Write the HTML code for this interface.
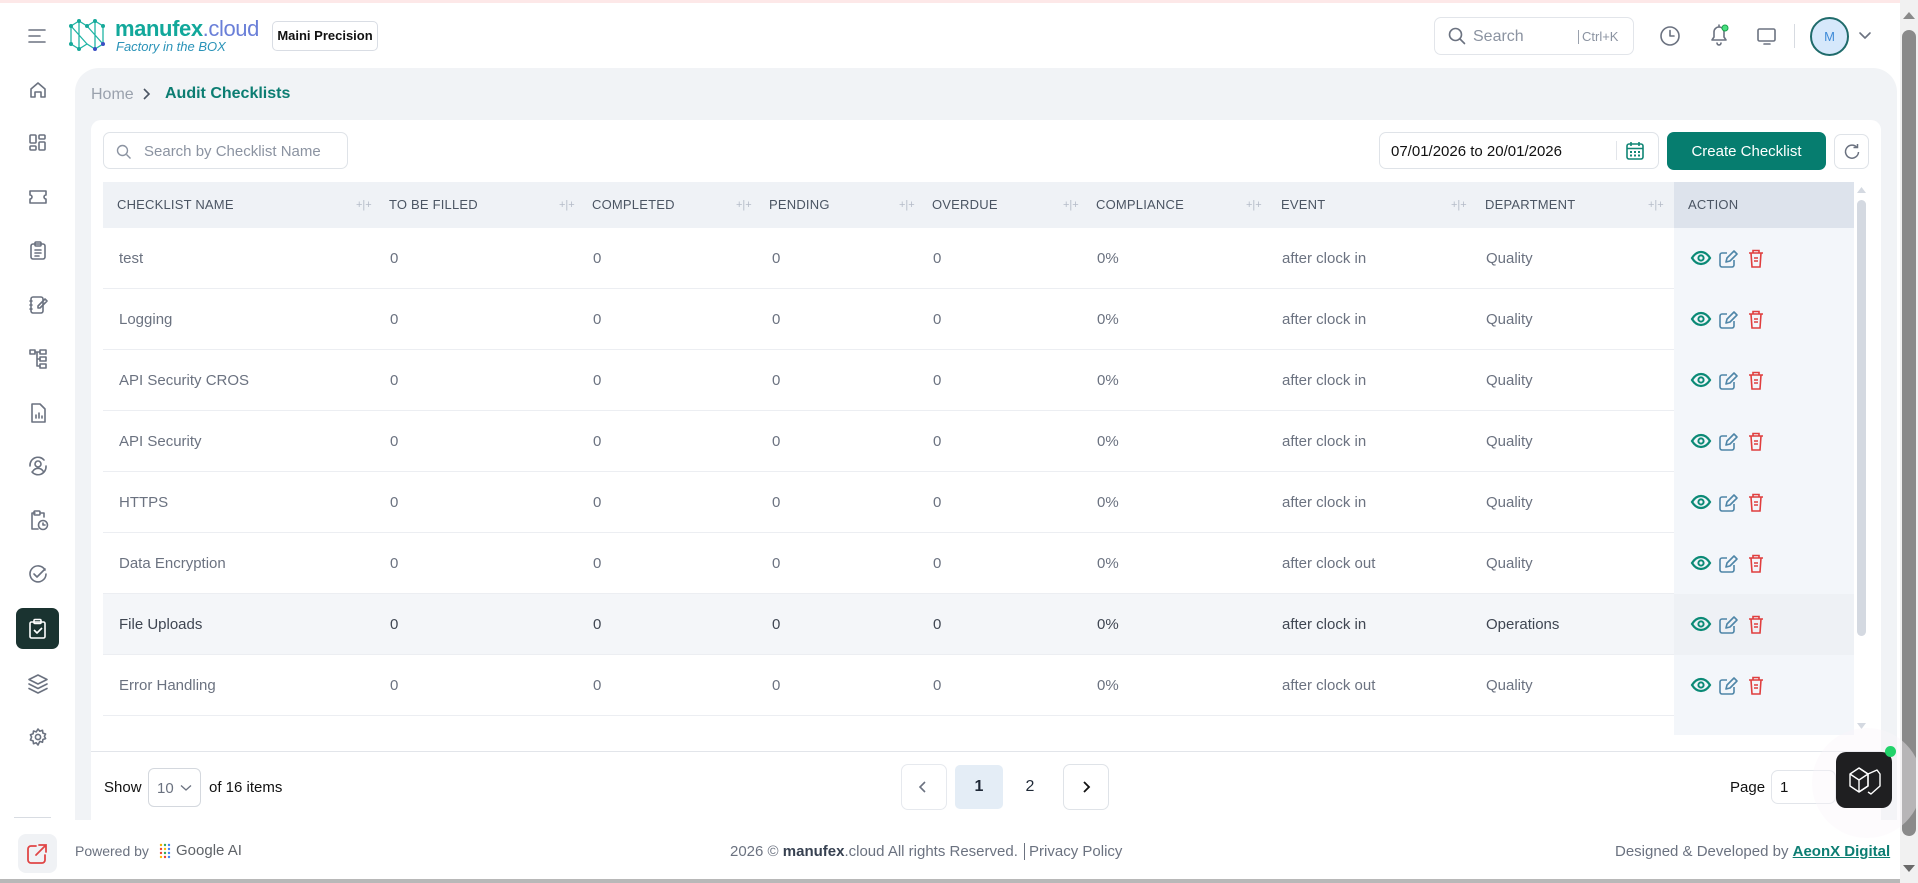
<!DOCTYPE html>
<html><head><meta charset="utf-8"><style>
*{box-sizing:border-box;margin:0;padding:0}
body{width:1918px;height:883px;overflow:hidden;background:#fff;font-family:"Liberation Sans",sans-serif;position:relative;color:#6b7280}
.a{position:absolute}
svg{display:block}
.ic{stroke:#6b7280;fill:none;stroke-width:1.6;stroke-linecap:round;stroke-linejoin:round}
.th{position:absolute;top:182px;height:46px;line-height:46px;font-size:13px;color:#4b5563;letter-spacing:.2px}
.rz{position:absolute;top:182px;height:46px;line-height:46px;font-size:11px;color:#b5bcc8}
.row{position:absolute;left:103px;width:1571px;height:61px;border-bottom:1px solid #eceef2;font-size:15px;color:#6b7280}
.row span{position:absolute;top:0;line-height:61px}
</style></head><body>
<div class="a" style="left:0;top:0;width:1918px;height:3px;background:#fde8e8"></div>
<svg class="a" style="left:28px;top:28px" width="20" height="16"><path d="M1 2h16M1 8h11M1 14h16" stroke="#6b7280" stroke-width="1.6" stroke-linecap="round"/></svg>
<svg class="a" style="left:67px;top:18px" width="42" height="34" viewBox="0 0 42 34"><g stroke="#1fb5a5" stroke-width="1.3" fill="none"><path d="M4 8L12 3L20 8L28 3L36 8V26L28 31L20 26L12 31L4 26Z"/><path d="M12 3V31M4 8L20 26M28 3V31M20 8L36 26"/></g><g fill="#17a99a"><circle cx="4" cy="8" r="2"/><circle cx="12" cy="3" r="2"/><circle cx="20" cy="8" r="2"/><circle cx="28" cy="3" r="2"/><circle cx="36" cy="8" r="2"/><circle cx="4" cy="26" r="2"/><circle cx="12" cy="31" r="2"/><circle cx="28" cy="31" r="2" fill="#3b4fc4"/><circle cx="36" cy="26" r="2" fill="#3b4fc4"/></g></svg>
<div class="a" style="left:115px;top:16px;font-size:22px;color:#12a89b;font-weight:bold;letter-spacing:-.4px">manufex<span style="font-weight:normal;color:#6a7fd8">.cloud</span></div>
<div class="a" style="left:116px;top:39px;font-size:13px;font-style:italic;color:#2a93b8">Factory in the BOX</div>
<div class="a" style="left:272px;top:21px;width:106px;height:30px;border:1px solid #d9dde4;border-radius:5px;font-size:13px;font-weight:bold;color:#111;text-align:center;line-height:28px">Maini Precision</div>
<div class="a" style="left:1434px;top:17px;width:200px;height:38px;border:1px solid #e2e5ea;border-radius:7px"></div>
<svg class="a" style="left:1448px;top:27px" width="18" height="18"><circle cx="7.5" cy="7.5" r="6" class="ic" stroke="#4b5563"/><path d="M12 12l4.5 4.5" class="ic" stroke="#4b5563"/></svg>
<div class="a" style="left:1473px;top:28px;font-size:16px;color:#8b93a1">Search</div>
<div class="a" style="left:1578px;top:30px;font-size:13px;color:#8b93a1;border-left:1px solid #9aa1ad;padding-left:3px;line-height:14px">Ctrl+K</div>
<svg class="a" style="left:1659px;top:25px" width="22" height="22"><circle cx="11" cy="11" r="9" class="ic" stroke="#4b5563"/><path d="M11 5.5V11h4" class="ic" stroke="#4b5563"/></svg>
<svg class="a" style="left:1707px;top:23px" width="24" height="24"><path d="M5 17h14l-2-3v-5a5 5 0 0 0-10 0v5zM10 20a2 2 0 0 0 4 0M12 2v2" class="ic" stroke="#4b5563"/><circle cx="18" cy="5" r="3" fill="#4ade80" stroke="#16a34a"/></svg>
<svg class="a" style="left:1756px;top:27px" width="22" height="20"><rect x="2" y="2" width="17" height="12" rx="1.5" class="ic" stroke="#4b5563"/><path d="M8 17h6" class="ic" stroke="#4b5563"/></svg>
<div class="a" style="left:1794px;top:24px;width:1px;height:24px;background:#d7dbe1"></div>
<div class="a" style="left:1810px;top:17px;width:39px;height:39px;border-radius:50%;background:#d6e8fb;border:2px solid #1f6b6b;text-align:center;line-height:35px;font-size:13px;color:#3f8bd8">M</div>
<svg class="a" style="left:1858px;top:31px" width="14" height="10"><path d="M2 2l5 5 5-5" class="ic" stroke="#4b5563"/></svg>
<div class="a" style="left:1900px;top:0;width:18px;height:883px;background:#f1f1f1"></div>
<div class="a" style="left:1902px;top:30px;width:14px;height:806px;border-radius:7px;background:#8a8a8a"></div>
<svg class="a" style="left:1902px;top:10px" width="14" height="10"><path d="M1 9L7 2L13 9Z" fill="#8a8a8a"/></svg>
<svg class="a" style="left:1902px;top:864px" width="14" height="10"><path d="M1 1L7 8L13 1Z" fill="#6a6a6a"/></svg>
<div class="a" style="left:0;top:879px;width:1900px;height:4px;background:#b8b8b8"></div>
<svg class="a" style="left:0;top:78px" width="75" height="680">
<g class="ic" transform="translate(29,2)"><path d="M2 9L9 3l7 6v8h-4v-5H6v5H2z"/></g>
<g class="ic" transform="translate(29,56)"><rect x="1" y="1" width="6" height="8" rx="1"/><rect x="10" y="1" width="6" height="4" rx="1"/><rect x="1" y="12" width="6" height="4" rx="1"/><rect x="10" y="8" width="6" height="8" rx="1"/></g>
<g class="ic" transform="translate(29,110)"><path d="M1 3h16v4a2 2 0 0 0 0 4v4H1v-4a2 2 0 0 0 0-4z"/></g>
<g class="ic" transform="translate(30,163)"><rect x="1" y="3" width="14" height="15" rx="2"/><rect x="5" y="1" width="6" height="4" rx="1"/><path d="M5 9h6M5 12h6M5 15h4"/></g>
<g class="ic" transform="translate(29,217)"><rect x="2" y="2" width="12" height="16" rx="2"/><path d="M1 6h2M1 10h2M1 14h2M9 11l7-7 2 2-7 7H9z"/></g>
<g class="ic" transform="translate(29,271)"><rect x="1" y="1" width="5" height="4"/><rect x="11" y="1" width="6" height="4"/><rect x="11" y="8" width="6" height="4"/><rect x="11" y="15" width="6" height="4"/><path d="M6 3h5M8 3v14h3M8 10h3"/></g>
<g class="ic" transform="translate(30,325)"><path d="M2 1h8l5 5v13H2z"/><path d="M6 15v-3M9 15v-5M12 15v-2"/></g>
<g class="ic" transform="translate(28,378)"><circle cx="10" cy="8" r="3"/><path d="M5 15a6 6 0 0 1 10 0M2 10a8 8 0 0 1 14-6M18 10a8 8 0 0 1-14 6"/></g>
<g class="ic" transform="translate(29,432)"><path d="M6 3H3v16h6M12 3h3v4"/><rect x="5" y="1" width="6" height="4" rx="1"/><circle cx="14" cy="15" r="4.5"/><path d="M14 13v2h2"/></g>
<g class="ic" transform="translate(28,486)"><path d="M17 6a8 8 0 1 0 1 4"/><path d="M6 10l3 3 8-8"/></g>
</svg>
<div class="a" style="left:16px;top:608px;width:43px;height:41px;border-radius:7px;background:#1a3330"></div>
<svg class="a" style="left:28px;top:618px" width="20" height="22"><g stroke="#fff" stroke-width="1.6" fill="none" stroke-linejoin="round"><rect x="2" y="4" width="15" height="16" rx="1.5"/><rect x="6" y="1.5" width="7" height="4" rx="1"/><path d="M6 12l3 3 5-5"/></g></svg>
<svg class="a" style="left:27px;top:673px" width="22" height="22"><g class="ic"><path d="M11 2l9 4.5-9 4.5-9-4.5z"/><path d="M2 11l9 4.5 9-4.5M2 15.5l9 4.5 9-4.5"/></g></svg>
<svg class="a" style="left:28px;top:727px" width="20" height="20"><g class="ic" stroke-width="1.3"><circle cx="10" cy="10" r="2.6"/><path d="M10 2l1.8 2.2 2.7-.9.4 2.8 2.7.9-1.2 2.3 1.2 2.3-2.7.9-.4 2.8-2.7-.9L10 18l-1.8-2.2-2.7.9-.4-2.8-2.7-.9L3.6 10 2.4 7.7l2.7-.9.4-2.8 2.7.9z"/></g></svg>
<div class="a" style="left:14px;top:817px;width:37px;height:1px;background:#d8dce2"></div>
<div class="a" style="left:18px;top:834px;width:39px;height:39px;border-radius:8px;background:#f0f2f5"></div>
<svg class="a" style="left:26px;top:843px" width="24" height="22"><g stroke="#e04646" stroke-width="1.8" fill="none" stroke-linecap="round"><path d="M10 3H5a3 3 0 0 0-3 3v11a3 3 0 0 0 3 3h11a3 3 0 0 0 3-3v-5"/><path d="M13 2h7v7M20 2l-10 10"/></g></svg>
<div class="a" style="left:75px;top:68px;width:1822px;height:752px;background:#f1f3f6;border-radius:24px 24px 0 0"></div>
<div class="a" style="left:91px;top:86px;font-size:16px;color:#9aa1ad">Home</div>
<svg class="a" style="left:142px;top:87px" width="10" height="14"><path d="M2 2l5 5-5 5" stroke="#4b5563" stroke-width="1.6" fill="none"/></svg>
<div class="a" style="left:165px;top:85px;font-size:16px;font-weight:bold;color:#0c7d72">Audit Checklists</div>
<div class="a" style="left:91px;top:120px;width:1790px;height:700px;background:#fff;border-radius:10px 10px 0 0"></div>
<div class="a" style="left:103px;top:132px;width:245px;height:37px;border:1px solid #dfe3e8;border-radius:7px"></div>
<svg class="a" style="left:116px;top:144px" width="16" height="16"><circle cx="6.5" cy="6.5" r="5" stroke="#8b93a1" stroke-width="1.4" fill="none"/><path d="M10.5 10.5l4 4" stroke="#8b93a1" stroke-width="1.4"/></svg>
<div class="a" style="left:144px;top:143px;font-size:15px;color:#8b93a1">Search by Checklist Name</div>
<div class="a" style="left:1379px;top:132px;width:280px;height:37px;border:1px solid #dfe3e8;border-radius:7px"></div>
<div class="a" style="left:1391px;top:143px;font-size:15px;color:#111">07/01/2026 to 20/01/2026</div>
<div class="a" style="left:1616px;top:141px;width:1px;height:19px;background:#e2e5ea"></div>
<svg class="a" style="left:1625px;top:141px" width="20" height="20"><g stroke="#108575" stroke-width="1.6" fill="none"><rect x="2" y="3" width="16" height="15" rx="2"/><path d="M2 7.5h16M6 1v4M14 1v4"/></g><g fill="#108575"><rect x="5" y="10" width="2" height="2"/><rect x="9" y="10" width="2" height="2"/><rect x="13" y="10" width="2" height="2"/><rect x="5" y="13.5" width="2" height="2"/><rect x="9" y="13.5" width="2" height="2"/><rect x="13" y="13.5" width="2" height="2"/></g></svg>
<div class="a" style="left:1667px;top:132px;width:159px;height:38px;border-radius:7px;background:#067d6f;color:#fff;font-size:15px;text-align:center;line-height:39px">Create Checklist</div>
<div class="a" style="left:1834px;top:134px;width:35px;height:35px;border:1px solid #dfe3e8;border-radius:7px"></div>
<svg class="a" style="left:1843px;top:143px" width="18" height="18"><path d="M14 4.5A6.5 6.5 0 1 0 15.5 9" stroke="#6b7280" stroke-width="1.5" fill="none"/><path d="M10.5 4.5H14.5V1" stroke="#6b7280" stroke-width="1.5" fill="none"/></svg>
<div class="a" style="left:103px;top:182px;width:1571px;height:46px;background:#eff2f6"></div>
<div class="a" style="left:1674px;top:182px;width:180px;height:553px;background:#f3f6fa"></div>
<div class="a" style="left:1674px;top:594px;width:180px;height:61px;background:#eef1f5"></div>
<div class="a" style="left:1674px;top:182px;width:180px;height:46px;background:#dde3ec"></div>
<div class="a" style="left:1854px;top:182px;width:14px;height:553px;background:#fff"></div>
<div class="a" style="left:1857px;top:200px;width:9px;height:436px;border-radius:5px;background:#d4d9e1"></div>
<svg class="a" style="left:1856px;top:186px" width="11" height="8"><path d="M1 7L5.5 1L10 7Z" fill="#d4d9e1"/></svg>
<svg class="a" style="left:1856px;top:722px" width="11" height="8"><path d="M1 1L5.5 7L10 1Z" fill="#d4d9e1"/></svg>
<div class="th" style="left:117px">CHECKLIST NAME</div>
<div class="th" style="left:389px">TO BE FILLED</div>
<div class="th" style="left:592px">COMPLETED</div>
<div class="th" style="left:769px">PENDING</div>
<div class="th" style="left:932px">OVERDUE</div>
<div class="th" style="left:1096px">COMPLIANCE</div>
<div class="th" style="left:1281px">EVENT</div>
<div class="th" style="left:1485px">DEPARTMENT</div>
<div class="th" style="left:1688px">ACTION</div>
<div class="rz" style="left:356px">+|+</div><div class="rz" style="left:559px">+|+</div><div class="rz" style="left:736px">+|+</div><div class="rz" style="left:899px">+|+</div><div class="rz" style="left:1063px">+|+</div><div class="rz" style="left:1246px">+|+</div><div class="rz" style="left:1451px">+|+</div><div class="rz" style="left:1648px">+|+</div>

<div class="row" style="top:228px"><span style="left:16px">test</span><span style="left:287px">0</span><span style="left:490px">0</span><span style="left:669px">0</span><span style="left:830px">0</span><span style="left:994px">0%</span><span style="left:1179px">after clock in</span><span style="left:1383px">Quality</span></div>
<div class="row" style="top:289px"><span style="left:16px">Logging</span><span style="left:287px">0</span><span style="left:490px">0</span><span style="left:669px">0</span><span style="left:830px">0</span><span style="left:994px">0%</span><span style="left:1179px">after clock in</span><span style="left:1383px">Quality</span></div>
<div class="row" style="top:350px"><span style="left:16px">API Security CROS</span><span style="left:287px">0</span><span style="left:490px">0</span><span style="left:669px">0</span><span style="left:830px">0</span><span style="left:994px">0%</span><span style="left:1179px">after clock in</span><span style="left:1383px">Quality</span></div>
<div class="row" style="top:411px"><span style="left:16px">API Security</span><span style="left:287px">0</span><span style="left:490px">0</span><span style="left:669px">0</span><span style="left:830px">0</span><span style="left:994px">0%</span><span style="left:1179px">after clock in</span><span style="left:1383px">Quality</span></div>
<div class="row" style="top:472px"><span style="left:16px">HTTPS</span><span style="left:287px">0</span><span style="left:490px">0</span><span style="left:669px">0</span><span style="left:830px">0</span><span style="left:994px">0%</span><span style="left:1179px">after clock in</span><span style="left:1383px">Quality</span></div>
<div class="row" style="top:533px"><span style="left:16px">Data Encryption</span><span style="left:287px">0</span><span style="left:490px">0</span><span style="left:669px">0</span><span style="left:830px">0</span><span style="left:994px">0%</span><span style="left:1179px">after clock out</span><span style="left:1383px">Quality</span></div>
<div class="row" style="top:594px;background:#f4f6f9;color:#3f4652"><span style="left:16px">File Uploads</span><span style="left:287px">0</span><span style="left:490px">0</span><span style="left:669px">0</span><span style="left:830px">0</span><span style="left:994px">0%</span><span style="left:1179px">after clock in</span><span style="left:1383px">Operations</span></div>
<div class="row" style="top:655px"><span style="left:16px">Error Handling</span><span style="left:287px">0</span><span style="left:490px">0</span><span style="left:669px">0</span><span style="left:830px">0</span><span style="left:994px">0%</span><span style="left:1179px">after clock out</span><span style="left:1383px">Quality</span></div>

<svg class="a" style="left:1690px;top:248px" width="90" height="480">
<defs><g id="ac">
<path d="M2 10c2.5-4 5.5-6 9-6s6.5 2 9 6c-2.5 4-5.5 6-9 6s-6.5-2-9-6z" stroke="#0b8a76" stroke-width="2.2" fill="none"/><circle cx="11" cy="10" r="2.6" stroke="#0b8a76" stroke-width="2" fill="none"/>
<path d="M37 5h-5a2 2 0 0 0-2 2v10a2 2 0 0 0 2 2h10a2 2 0 0 0 2-2v-5" stroke="#4f86a8" stroke-width="1.6" fill="none"/><path d="M36 14l1-4 7-7 3 3-7 7z" stroke="#4f86a8" stroke-width="1.6" fill="none" stroke-linejoin="round"/>
<path d="M59 5h14M63 5V2.5h6V5M61 5l1 14h8l1-14M64 10h4M64 13h4" stroke="#e03e3e" stroke-width="1.6" fill="none"/>
</g></defs>
<use href="#ac" y="0"/><use href="#ac" y="61"/><use href="#ac" y="122"/><use href="#ac" y="183"/><use href="#ac" y="244"/><use href="#ac" y="305"/><use href="#ac" y="366"/><use href="#ac" y="427"/>
</svg>
<div class="a" style="left:91px;top:751px;width:1790px;height:1px;background:#e2e5ea"></div>
<div class="a" style="left:104px;top:779px;font-size:15px;color:#111">Show</div>
<div class="a" style="left:148px;top:768px;width:53px;height:39px;border:1px solid #d4d8de;border-radius:6px;font-size:15px;color:#6b7280;line-height:39px;padding-left:8px">10</div>
<svg class="a" style="left:180px;top:784px" width="12" height="8"><path d="M1 1.5l5 4.5 5-4.5" stroke="#6b7280" stroke-width="1.3" fill="none"/></svg>
<div class="a" style="left:209px;top:779px;font-size:15px;color:#111">of 16 items</div>
<div class="a" style="left:901px;top:764px;width:46px;height:46px;border:1px solid #e6e9ee;border-radius:7px"></div>
<svg class="a" style="left:918px;top:780px" width="10" height="14"><path d="M7 2L2 7l5 5" stroke="#6b7280" stroke-width="1.6" fill="none"/></svg>
<div class="a" style="left:955px;top:765px;width:48px;height:44px;border-radius:5px;background:#e4edf6;font-size:16px;font-weight:bold;color:#1f2937;text-align:center;line-height:44px">1</div>
<div class="a" style="left:1006px;top:765px;width:48px;height:44px;font-size:16px;color:#1f2937;text-align:center;line-height:44px">2</div>
<div class="a" style="left:1063px;top:764px;width:46px;height:46px;border:1px solid #dfe3e8;border-radius:7px"></div>
<svg class="a" style="left:1081px;top:780px" width="10" height="14"><path d="M3 2l5 5-5 5" stroke="#111" stroke-width="1.8" fill="none"/></svg>
<div class="a" style="left:1730px;top:779px;font-size:15px;color:#111">Page</div>
<div class="a" style="left:1771px;top:770px;width:65px;height:34px;border:1px solid #e2e5ea;border-radius:7px;font-size:15px;color:#111;line-height:34px;padding-left:8px">1</div>
<div class="a" style="left:1812px;top:728px;width:110px;height:110px;border-radius:50%;background:rgba(250,244,250,.4)"></div>
<div class="a" style="left:1836px;top:752px;width:56px;height:56px;border-radius:10px;background:#1f1f21"></div>
<svg class="a" style="left:1846px;top:764px" width="36" height="34"><g stroke="#fff" stroke-width="1.4" fill="none" stroke-linejoin="round"><path d="M4 10l9-6 9 6v12l-9 6-9-6z"/><path d="M13 4l9 6 9-4 3 4v12l-9 8-3-2M22 10v12l-9 6M4 10l9 6 9-6M13 16v12"/></g></svg>
<div class="a" style="left:1885px;top:746px;width:11px;height:11px;border-radius:50%;background:#22d36a"></div>
<div class="a" style="left:75px;top:843px;font-size:14px;color:#6b7280">Powered by</div>
<svg class="a" style="left:158px;top:843px" width="14" height="17"><g><circle cx="3" cy="2" r="1.2" fill="#f4b400"/><circle cx="7" cy="2" r="1.2" fill="#34a853"/><circle cx="11" cy="2" r="1.2" fill="#4285f4"/><circle cx="3" cy="6" r="1.2" fill="#ea4335"/><circle cx="7" cy="6" r="1.2" fill="#fbbc05"/><circle cx="11" cy="6" r="1.2" fill="#4285f4"/><circle cx="3" cy="10" r="1.2" fill="#ea4335"/><circle cx="7" cy="10" r="1.2" fill="#34a853"/><circle cx="11" cy="10" r="1.2" fill="#4285f4"/><circle cx="3" cy="14" r="1.2" fill="#fbbc05"/><circle cx="7" cy="14" r="1.2" fill="#ea4335"/><circle cx="11" cy="14" r="1.2" fill="#4285f4"/></g></svg>
<div class="a" style="left:176px;top:842px;font-size:15px;color:#5f6368">Google AI</div>
<div class="a" style="left:730px;top:843px;font-size:15px;color:#6b7280">2026 © <b style="color:#374151">manufex</b>.cloud All rights Reserved. <span style="border-left:1px solid #6b7280;padding-left:4px;margin-left:2px">Privacy Policy</span></div>
<div class="a" style="left:1615px;top:843px;font-size:15px;color:#6b7280">Designed &amp; Developed by <b style="color:#0c7d72;text-decoration:underline">AeonX Digital</b></div>
</body></html>
